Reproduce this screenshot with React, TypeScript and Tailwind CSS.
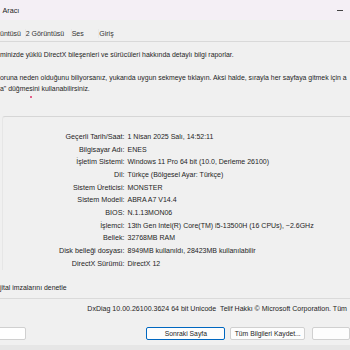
export default function App() {
  const rows: [string, string][] = [
    ["Geçerli Tarih/Saat:", "1 Nisan 2025 Salı, 14:52:11"],
    ["Bilgisayar Adı:", "ENES"],
    ["İşletim Sistemi:", "Windows 11 Pro 64 bit (10.0, Derleme 26100)"],
    ["Dil:", "Türkçe (Bölgesel Ayar: Türkçe)"],
    ["Sistem Üreticisi:", "MONSTER"],
    ["Sistem Modeli:", "ABRA A7 V14.4"],
    ["BIOS:", "N.1.13MON06"],
    ["İşlemci:", "13th Gen Intel(R) Core(TM) i5-13500H (16 CPUs), ~2.6GHz"],
    ["Bellek:", "32768MB RAM"],
    ["Disk belleği dosyası:", "8949MB kullanıldı, 28423MB kullanılabilir"],
    ["DirectX Sürümü:", "DirectX 12"],
  ];
  return (
    <div className="w-[350px] h-[350px] overflow-hidden bg-[#f0f0f0] text-[#1e1e1e] flex flex-col font-['Liberation_Sans',Arial,sans-serif] text-[6.9px] leading-[9px] whitespace-nowrap">
      {/* title bar */}
      <div className="h-[20px] shrink-0 bg-[#f4eff5] flex items-center justify-between pl-[2.5px] pr-[7px]">
        <span className="text-[7.2px] mt-[1px]">Aracı</span>
        <div className="w-[6px] h-px bg-[#444]" />
      </div>
      {/* tabs */}
      <div className="h-[22px] shrink-0 flex items-end border-b border-[#d9d9d9] pb-[3px] text-[#333] text-[7px]">
        <div className="w-[25.7px] h-[9px] border-r border-[#e8e8e8]">üntüsü</div>
        <div className="w-[46px] h-[9px] border-r border-[#e8e8e8]">2 Görüntüsü</div>
        <div className="w-[27.6px] h-[9px] border-r border-[#e8e8e8]">Ses</div>
        <div className="w-[40px] h-[9px]">Giriş</div>
      </div>
      {/* panel */}
      <div className="flex flex-col shrink-0">
        <div className="mt-[8px] h-[10px] leading-[10px]">
          minizde yüklü DirectX bileşenleri ve sürücüleri hakkında detaylı bilgi raporlar.
        </div>
        <div className="mt-[12px] leading-[11px]">
          <div>oruna neden olduğunu biliyorsanız, yukarıda uygun sekmeye tıklayın. Aksi halde, sırayla her sayfaya gitmek için a</div>
          <div>a" düğmesini kullanabilirsiniz.</div>
        </div>
        <div className="mt-[2px] ml-[30px] w-[2px] h-[2px] rounded-full bg-[#e0306a]" />
        {/* group box */}
        <div className="mt-[18px] ml-[2px] border-t border-l border-t-[#d6d6d6] border-l-[#e6e6e6] rounded-tl-[3px] pt-[13px]">
          {rows.map(([k, v]) => (
            <div key={k} className="flex h-[12.7px] items-center">
              <div className="w-[121.5px] text-right text-[7.2px]">{k}</div>
              <div className="pl-[3px] text-[7px]">{v}</div>
            </div>
          ))}
        </div>
        <div className="mt-[13px] h-[9px]">jital imzalarını denetle</div>
        <div className="mt-[6px] border-t border-[#dadada]" />
        <div className="mt-[5px] h-[9px] pl-[87.3px] text-[7.05px]">
          DxDiag 10.00.26100.3624 64 bit Unicode&nbsp;&nbsp;Telif Hakkı © Microsoft Corporation. Tüm
        </div>
        {/* buttons */}
        <div className="mt-[14.6px] h-[13px] flex text-[6.8px]">
          <div className="ml-[-20px] w-[49px] h-[13px] bg-white border border-[#d0d0d0] rounded-[2px]" />
          <div className="ml-[120px] w-[83.7px] h-[13px] bg-[#fdfdfd] border border-[#0067c0] rounded-[2px] flex items-center justify-center">
            Sonraki Sayfa
          </div>
          <div className="ml-[4.6px] w-[80px] h-[13px] bg-[#fdfdfd] border border-[#d0d0d0] rounded-[2px] flex items-center justify-center">
            Tüm Bilgileri Kaydet...
          </div>
          <div className="ml-[6.7px] w-[40px] h-[13px] bg-[#fdfdfd] border border-[#d0d0d0] rounded-[2px]" />
        </div>
      </div>
      <div className="mt-[5px] flex-1 bg-[#e6e6e6]" />
    </div>
  );
}
